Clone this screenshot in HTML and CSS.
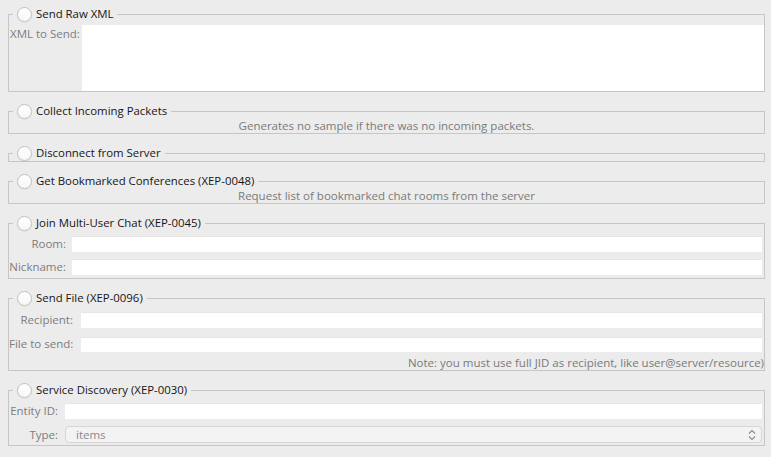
FILE: index.html
```html
<!DOCTYPE html>
<html>
<head>
<meta charset="utf-8">
<link rel="stylesheet" href="styles.css">
</head>
<body>
<div class="page">
  <fieldset class="group">
    <legend class="title"><span class="radio"></span><span>Send Raw XML</span></legend>
    <div class="xml-body">
      <label class="lbl lbl-left">XML to Send:</label>
      <div class="textarea"></div>
    </div>
  </fieldset>

  <fieldset class="group">
    <legend class="title"><span class="radio"></span><span>Collect Incoming Packets</span></legend>
    <div class="desc">Generates no sample if there was no incoming packets.</div>
  </fieldset>

  <fieldset class="group">
    <legend class="title"><span class="radio"></span><span>Disconnect from Server</span></legend>
  </fieldset>

  <fieldset class="group">
    <legend class="title"><span class="radio"></span><span>Get Bookmarked Conferences (XEP-0048)</span></legend>
    <div class="desc">Request list of bookmarked chat rooms from the server</div>
  </fieldset>

  <fieldset class="group">
    <legend class="title"><span class="radio"></span><span>Join Multi-User Chat (XEP-0045)</span></legend>
    <div class="form form-muc">
      <label class="lbl">Room:</label><div class="field"></div>
      <label class="lbl">Nickname:</label><div class="field"></div>
    </div>
  </fieldset>

  <fieldset class="group">
    <legend class="title"><span class="radio"></span><span>Send File (XEP-0096)</span></legend>
    <div class="form form-file">
      <label class="lbl">Recipient:</label><div class="field"></div>
      <label class="lbl">File to send:</label><div class="field field-15"></div>
    </div>
    <div class="note">Note: you must use full JID as recipient, like user@server/resource)</div>
  </fieldset>

  <fieldset class="group">
    <legend class="title"><span class="radio"></span><span>Service Discovery (XEP-0030)</span></legend>
    <div class="form form-disco">
      <label class="lbl">Entity ID:</label><div class="field"></div>
      <label class="lbl">Type:</label>
      <div class="combo"><span>items</span>
        <svg class="arrows" width="8" height="12" viewBox="0 0 8 12"><path d="M1 4.5 L4 1.5 L7 4.5 M1 7.5 L4 10.5 L7 7.5" fill="none" stroke="#8a8a8a" stroke-width="1.1"/></svg>
      </div>
    </div>
  </fieldset>
</div>
</body>
</html>
```

FILE: styles.css
```css
html, body {
  margin: 0;
  padding: 0;
  background: #ececec;
}
body {
  font-family: "Open Sans", "Liberation Sans", Arial, sans-serif;
  font-size: 11.5px;
  color: #1c1c1c;
}
.page {
  padding: 6px 6px 0 8px;
  display: flex;
  flex-direction: column;
  gap: 11px;
}
.group {
  margin: 0;
  padding: 0;
  border: 1px solid #c6c6c6;
  min-width: 0;
}
.title {
  display: flex;
  align-items: center;
  gap: 4px;
  height: 16px;
  line-height: 16px;
  margin-left: 4px;
  padding: 0 4px;
  font-size: 11.4px;
  color: #161616;
}
.radio {
  width: 13px;
  height: 13px;
  border-radius: 50%;
  background: linear-gradient(#ffffff, #f7f7f7);
  border: 1px solid #c2c2c2;
  box-shadow: 0 0.5px 1px rgba(0,0,0,0.08);
  flex: none;
}
.lbl {
  color: #7d7d7d;
  font-size: 11.5px;
  line-height: 16px;
  text-align: right;
  white-space: nowrap;
}
.lbl-left {
  text-align: left;
}
.xml-body {
  display: grid;
  grid-template-columns: 72px 1fr;
  height: 66px;
  padding: 3px 0 0 1px;
}
.xml-body .lbl {
  padding-top: 1px;
}
.textarea {
  background: #ffffff;
  height: 66px;
}
.desc {
  text-align: center;
  color: #7a7a7a;
  font-size: 11.5px;
  line-height: 14px;
  height: 14px;
}
.form {
  display: grid;
  align-items: center;
  padding-right: 2px;
}
.form-muc {
  grid-template-columns: 57px 1fr;
  column-gap: 6px;
  row-gap: 7px;
  padding-top: 5px;
  padding-bottom: 3px;
}
.form-file {
  grid-template-columns: 64px 1fr;
  column-gap: 8px;
  row-gap: 8px;
  padding-top: 6px;
}
.form-disco {
  grid-template-columns: 49px 1fr;
  column-gap: 7px;
  row-gap: 7px;
  padding-top: 5px;
  padding-bottom: 2px;
}
.field {
  background: #ffffff;
  height: 16px;
  box-shadow: inset 0 1px 0 #e6e6e6;
}
.field-15 {
  height: 15px;
}
.note {
  text-align: right;
  color: #7a7a7a;
  font-size: 11.5px;
  line-height: 14px;
  padding: 4px 0 0 0;
}
.combo {
  height: 15px;
  border: 1px solid #d6d6d6;
  border-radius: 4px;
  background: #f3f3f3;
  display: flex;
  align-items: center;
  justify-content: space-between;
  padding: 0 5px 0 10px;
  color: #8a8a8a;
  font-size: 11.5px;
}
.arrows {
  display: block;
}
```
